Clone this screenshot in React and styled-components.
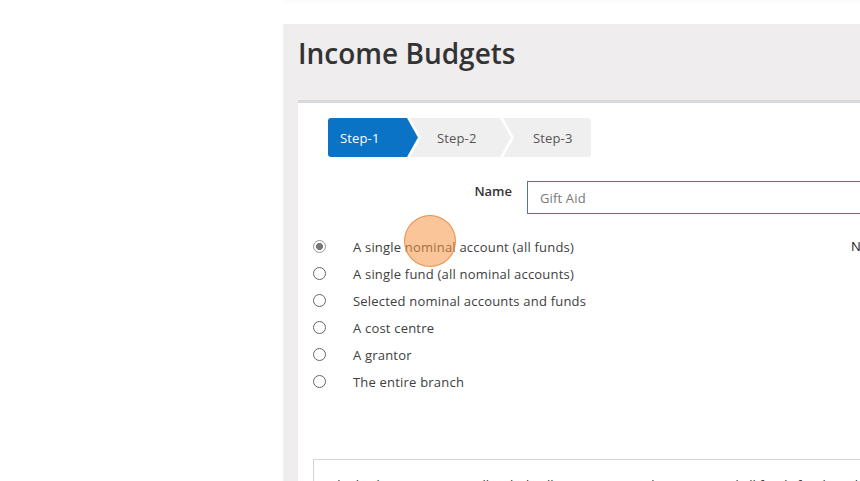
import React from 'react';
import styled, { createGlobalStyle } from 'styled-components';

const Global = createGlobalStyle`
  html, body {
    margin: 0;
    padding: 0;
    background: #fff;
    overflow: hidden;
    font-family: "Open Sans", "Liberation Sans", sans-serif;
    color: #333;
  }
`

const Page = styled.div`
  display: flex;
  width: 1200px;
  height: 481px;
  overflow: hidden;
`

const Sidebar = styled.div`
  width: 283px;
  flex: none;
`

const Main = styled.div`
  flex: 1;
  display: flex;
  flex-direction: column;
`

const TopStrip = styled.div`
  flex: none;
  height: 24px;
  border-top: 3px solid #fafcfc;
  box-sizing: border-box;
`

const Panel = styled.div`
  flex: none;
  background: #efedee;
  padding: 1px 0 0 15px;
`

const Title = styled.h1`
  margin: 9px 0 28px;
  font-size: 28px;
  font-weight: 600;
  line-height: 38px;
  color: #333;
`

const Card = styled.div`
  position: relative;
  background: #fff;
  border-top: 3px solid #d6d9de;
  padding: 15px 15px 0;
  height: 600px;
`

const Steps = styled.div`
  display: flex;
  margin-left: 15px;
  height: 39px;
`

const Step = styled.div`
  height: 39px;
  display: flex;
  align-items: center;
  box-sizing: border-box;
  font-size: 13px;
  letter-spacing: 0.15px;
  background: ${p => (p.$active ? '#0b73c6' : '#efefef')};
  color: ${p => (p.$active ? '#fff' : '#555')};
  padding-left: ${p => p.$pl}px;
  width: ${p => p.$w}px;
  margin-left: ${p => (p.$first ? 0 : -8)}px;
  border-radius: ${p => (p.$first ? '3px 0 0 3px' : p.$last ? '0 3px 3px 0' : '0')};
  clip-path: ${p =>
    p.$first
      ? 'polygon(0 0, calc(100% - 11px) 0, 100% 50%, calc(100% - 11px) 100%, 0 100%)'
      : p.$last
      ? 'polygon(0 0, 100% 0, 100% 100%, 0 100%, 11px 50%)'
      : 'polygon(0 0, calc(100% - 11px) 0, 100% 50%, calc(100% - 11px) 100%, 0 100%, 11px 50%)'};
`

const NameRow = styled.div`
  display: flex;
  align-items: flex-start;
  margin-top: 24px;
  gap: 15px;
`

const Label = styled.label`
  width: 199px;
  text-align: right;
  font-size: 13px;
  font-weight: 600;
  line-height: 18px;
  padding-top: 1px;
  color: #333;
`

const TextInput = styled.input`
  width: 500px;
  height: 33px;
  box-sizing: border-box;
  border: 1px solid #4f7c86;
  padding: 0 12px;
  font-family: inherit;
  font-size: 13px;
  letter-spacing: 0.15px;
  color: #777;
  outline: none;
`

const Options = styled.div`
  display: grid;
  grid-template-columns: 538px 1fr;
  margin-top: 19px;
`

const RadioList = styled.div`
  display: flex;
  flex-direction: column;
`

const RadioRow = styled.label`
  display: flex;
  align-items: center;
  height: 27px;
  font-size: 13px;
  letter-spacing: 0.2px;
  color: #404040;
`

const Radio = styled.input.attrs({ type: 'radio' })`
  appearance: none;
  margin: 0 27px 0 0;
  width: 13px;
  height: 13px;
  border-radius: 50%;
  border: 1px solid ${p => (p.checked ? '#999' : '#666')};
  box-sizing: border-box;
  background: ${p => (p.checked ? 'radial-gradient(circle, #777 0 3.2px, #fff 3.8px)' : '#fff')};
`

const SideLabel = styled.div`
  font-size: 13px;
  line-height: 27px;
  color: #222;
  white-space: nowrap;
`

const InfoBox = styled.div`
  margin-top: 64px;
  border: 1px solid #d3d3d3;
  padding: 16px 16px;
  font-size: 13px;
  color: #333;
  white-space: nowrap;
`

const ClickMark = styled.div`
  position: absolute;
  left: 106px;
  top: 112px;
  width: 50px;
  height: 50px;
  border-radius: 50%;
  background: rgba(244, 150, 70, 0.55);
  border: 1px solid rgba(230, 130, 60, 0.8);
  pointer-events: none;
`

const options = [
  'A single nominal account (all funds)',
  'A single fund (all nominal accounts)',
  'Selected nominal accounts and funds',
  'A cost centre',
  'A grantor',
  'The entire branch',
]

export default function App() {
  return (
    <>
      <Global />
      <Page>
        <Sidebar />
        <Main>
          <TopStrip />
          <Panel>
            <Title>Income Budgets</Title>
            <Card>
              <Steps>
                <Step $active $first $w={90} $pl={12}>Step-1</Step>
                <Step $w={101} $pl={27}>Step-2</Step>
                <Step $last $w={88} $pl={30}>Step-3</Step>
              </Steps>
              <NameRow>
                <Label>Name</Label>
                <TextInput defaultValue="Gift Aid" />
              </NameRow>
              <Options>
                <RadioList>
                  {options.map((o, i) => (
                    <RadioRow key={o}>
                      <Radio name="scope" checked={i === 0} readOnly />
                      {o}
                    </RadioRow>
                  ))}
                </RadioList>
                <SideLabel>Nominal account</SideLabel>
              </Options>
              <InfoBox>
                The budget you create will include all income nominal accounts and all funds for the selected account.
              </InfoBox>
              <ClickMark />
            </Card>
          </Panel>
        </Main>
      </Page>
    </>
  );
}
